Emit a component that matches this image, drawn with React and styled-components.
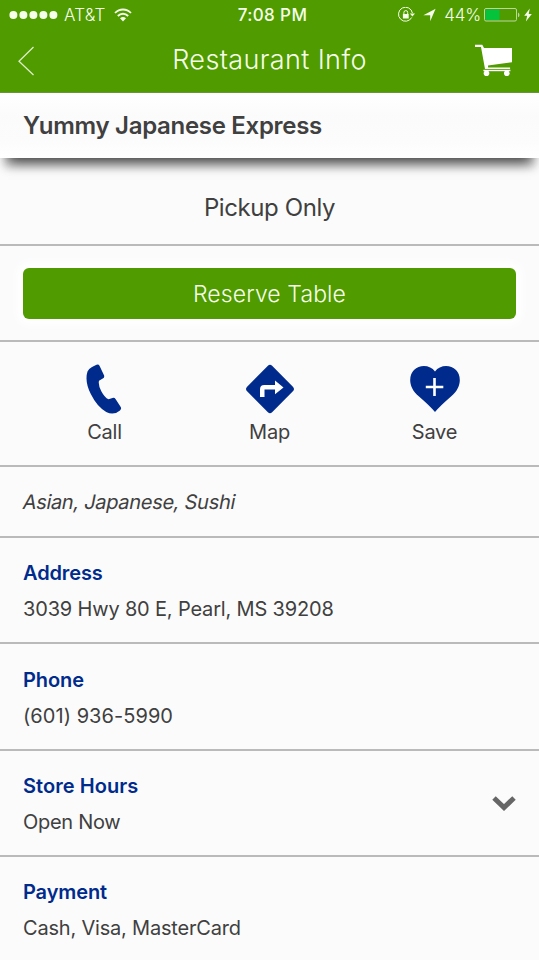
import React from "react";
import styled, { createGlobalStyle } from "styled-components";

const GREEN = "#4f9b00";
const NAVY = "#002b8c";

const GlobalStyle = createGlobalStyle`
  * { box-sizing: border-box; }
  body { margin: 0; background: #fbfbfb; overflow: hidden; }
`;

const Screen = styled.main`
  width: 539px;
  height: 960px;
  overflow: hidden;
  background: #fbfbfb;
  color: #404040;
  font-family: Inter, "Liberation Sans", sans-serif;
  white-space: nowrap;
`;

const Header = styled.header`
  height: 93px;
  background: ${GREEN};
  color: #f6ffe9;
  border-bottom: 1px solid #68973a;
`;

const StatusBar = styled.div`
  height: 30px;
  display: grid;
  grid-template-columns: 1fr auto 1fr;
  align-items: center;
  padding: 0 7px 0 9px;
  font-size: 17px;
  font-weight: 300;

  svg { flex: none; }
`;

const StatusGroup = styled.div`
  display: flex;
  align-items: center;
  justify-content: ${(p) => (p.$end ? "flex-end" : "flex-start")};
`;

const Carrier = styled.span`
  margin: 0 8px 0 6px;
  letter-spacing: 0.2px;
`;

const Clock = styled.time`
  font-weight: 500;
  letter-spacing: 0.4px;
  padding-left: 4px;
`;

const Percent = styled.span`
  margin: 0 3px 0 8px;
  letter-spacing: -0.15px;
`;

const NavBar = styled.nav`
  height: 62px;
  display: grid;
  grid-template-columns: 82px 1fr 82px;
  align-items: center;
`;

const NavButton = styled.button`
  display: flex;
  justify-content: ${(p) => (p.$end ? "flex-end" : "flex-start")};
  border: 0;
  padding: 0 ${(p) => (p.$end ? 26 : 18)}px ${(p) => (p.$end ? 2 : 0)}px 18px;
  background: none;
  color: inherit;

  svg { flex: none; }
`;

const NavTitle = styled.h1`
  margin: -3px 0 0;
  text-align: center;
  font-size: 27px;
  line-height: 34px;
  font-weight: 300;
  letter-spacing: 0.37px;
`;

const NameBar = styled.section`
  position: relative;
  height: 65px;
  padding: 0 23px;
  display: flex;
  align-items: center;
  background: linear-gradient(#fff, #fbfbfb 35%, #fcfcfc 75%, #fff);
  box-shadow: 0 12px 12px -8px rgba(0, 0, 0, 0.75), 0 14px 8px -4px rgba(0, 0, 0, 0.15);
`;

const Name = styled.h2`
  margin: 0;
  font-size: 24px;
  font-weight: 600;
  letter-spacing: -0.3px;
`;

const Panel = styled.section`
  height: ${(p) => p.$height}px;
  padding: 0 23px;
  display: flex;
  align-items: center;
  justify-content: ${(p) => (p.$center ? "center" : "flex-start")};
  border-bottom: 2px solid #bababa;
`;

const Service = styled.p`
  margin: 13px 0 0;
  font-size: 24px;
  letter-spacing: -0.4px;
`;

const ReserveButton = styled.button`
  width: 100%;
  height: 51px;
  padding: 1px 0 0;
  border: 0;
  border-radius: 6px;
  background: ${GREEN};
  color: #f6ffe9;
  font: 300 23px/50px Inter, "Liberation Sans", sans-serif;
  letter-spacing: 0.1px;
  box-shadow: 0 0 10px 6px #fff;
`;

const Actions = styled.section`
  height: 125px;
  padding: 22px 22px 0;
  display: grid;
  grid-template-columns: repeat(3, 1fr);
  border-bottom: 2px solid #bababa;
`;

const Action = styled.button`
  display: flex;
  flex-direction: column;
  align-items: center;
  padding: 0;
  border: 0;
  background: none;
  color: inherit;
  font: 400 20px/26px Inter, "Liberation Sans", sans-serif;
  letter-spacing: -0.2px;
`;

const ActionIcon = styled.svg`
  display: block;
  width: 50px;
  height: 50px;
  margin-bottom: 5px;
  fill: ${NAVY};
`;

const Cuisine = styled.p`
  margin: 1px 0 0;
  font-size: 20px;
  letter-spacing: -0.3px;
  transform: skewX(-11deg);
`;

const Detail = styled.section`
  height: ${(p) => p.$height}px;
  padding: ${(p) => p.$top}px 23px 0;
  display: flex;
  justify-content: space-between;
  border-bottom: 2px solid #bababa;
`;

const Label = styled.h3`
  margin: 0;
  color: ${NAVY};
  font-size: 20px;
  line-height: 28px;
  font-weight: 600;
  letter-spacing: ${(p) => p.$tracking}px;
`;

const Value = styled.p`
  margin: 8px 0 0;
  font-size: 20px;
  line-height: 28px;
  letter-spacing: ${(p) => p.$tracking}px;
`;

const Expand = styled.svg`
  width: 24px;
  height: 17px;
  margin-top: 23px;
`;

const details = [
  { label: "Address", value: "3039 Hwy 80 E, Pearl, MS 39208", height: 106, top: 21, lt: -0.12, vt: -0.17 },
  { label: "Phone", value: "(601) 936-5990", height: 107, top: 22, lt: -0.1, vt: 0.05 },
  { label: "Store Hours", value: "Open Now", height: 106, top: 21, lt: 0.05, vt: -0.3, expandable: true },
  { label: "Payment", value: "Cash, Visa, MasterCard", height: 107, top: 21, lt: -0.12, vt: -0.2 },
];

const SignalDots = () => (
  <svg width="49" height="10" viewBox="0 0 49 10" fill="currentColor">
    {[4.4, 14.4, 24.4, 34.4, 44.4].map((x) => <circle key={x} cx={x} cy="5" r="4" />)}
  </svg>
);

const Wifi = () => (
  <svg width="18" height="14" viewBox="0 0 18 14" fill="none" stroke="currentColor" strokeWidth="1.8">
    <path d="M1 5C5.5.3 12.5.3 17 5M3.8 8c3-3 7.4-3 10.4 0" />
    <path d="M6 10.2Q9 7.8 12 10.2L9 13.4Z" fill="currentColor" stroke="none" />
  </svg>
);

const RotationLock = () => (
  <svg width="18" height="16" viewBox="0 0 18 16" fill="none" stroke="currentColor">
    <path d="M13.7 10.5A7 7 0 1 1 14.4 6" strokeWidth="1" />
    <path d="M11.8 6.5h5.2l-2.6 3Z" fill="currentColor" stroke="none" />
    <rect x="4.9" y="7" width="5.8" height="4.5" fill="currentColor" stroke="none" />
    <path d="M5.9 7V5.5a1.9 1.9 0 0 1 3.8 0V7" strokeWidth="1" />
  </svg>
);

const ArrowMark = styled.svg`
  margin-left: 7px;
`;

const LocationArrow = () => (
  <ArrowMark width="13" height="14" viewBox="0 0 13 14" fill="currentColor">
    <path d="M12.6.8 7.2 13.2V7.2H.4Z" />
  </ArrowMark>
);

const Battery = () => (
  <svg width="36" height="14" viewBox="0 0 36 14">
    <rect x=".5" y=".5" width="32" height="12.5" rx="1.5" fill="none" stroke="#bed79f" />
    <rect x="1.5" y="1.5" width="14" height="10.5" fill="#05c33b" />
    <path d="M34 4.5v4.8q1.5-.8 1.5-2.4T34 4.5" fill="#bed79f" />
  </svg>
);

const BoltMark = styled.svg`
  margin-left: 4px;
`;

const Bolt = () => (
  <BoltMark width="8" height="14" viewBox="0 0 8 14" fill="currentColor">
    <path d="M5.8.5.2 7.8h3L1.900 13.500 7.800 6H4.700Z" />
  </BoltMark>
);

const BackIcon = () => (
  <svg width="17" height="30" viewBox="0 0 17 30" fill="none" stroke="#dfedc9" strokeWidth="1.3">
    <path d="M15.5 1 1 15.2 15.5 29" />
  </svg>
);

const CartIcon = () => (
  <svg width="38" height="33" viewBox="0 0 38 33" fill="#fff">
    <path d="M0 .8h7.300L9 4h28v14.300L13 21.500l.1 2h22v1.500H10L6 3H0Z" />
    <path d="M8.400 25.800h27v1.400h-27Z" />
    <circle cx="11.5" cy="29.3" r="2.8" />
    <circle cx="31.8" cy="29.3" r="2.8" />
  </svg>
);

const CallIcon = () => (
  <ActionIcon viewBox="-2.5 0 50 50">
    <path d="M9.5 3 14 .8q2-1 3 .9l4.5 9.6q.8 2-1.2 3.2l-3.8 2.2q-1 4.3 2.3 10.5t7.2 8.1l4-1.3q2-.6 3.2 1.3l5 7.6q1.1 2-.7 3.5-6.4 5.5-13.8 1.5-9-4.8-15.4-17.8T5 7.6Q6 4.8 9.5 3Z" />
  </ActionIcon>
);

const MapIcon = () => (
  <ActionIcon viewBox="0 0 50 50">
    <path d="m22.9 1.7-20.8 21q-2.200 2.300 0 4.600l20.800 21q2.100 2 4.200 0l20.800-21q2.200-2.300 0-4.600l-20.800-21q-2.100-2-4.200 0Z" />
    <path fill="#fff" d="M15 33V25.300q0-4.300 4.300-4.300H30V16.500l8.500 7L30 30.300v-4.800H19.500V33Z" />
  </ActionIcon>
);

const SaveIcon = () => (
  <ActionIcon viewBox="0 0 50 50">
    <path d="M25 48Q20 42 9 32.5C-2 23.5-1.5 11.5 4 6c6-6 16.5-5 21 1.5C29.5 1 40 0 46 6c5.5 5.5 6 17.5-5 26.5Q30 42 25 48Z" />
    <path d="M24.500 14v18M15.800 23h17.500" stroke="#fff" strokeWidth="2.600" />
  </ActionIcon>
);

export default function App() {
  return (
    <Screen>
      <GlobalStyle />
      <Header>
        <StatusBar>
          <StatusGroup>
            <SignalDots />
            <Carrier>AT&amp;T</Carrier>
            <Wifi />
          </StatusGroup>
          <Clock>7:08 PM</Clock>
          <StatusGroup $end>
            <RotationLock />
            <LocationArrow />
            <Percent>44%</Percent>
            <Battery />
            <Bolt />
          </StatusGroup>
        </StatusBar>
        <NavBar>
          <NavButton aria-label="Back"><BackIcon /></NavButton>
          <NavTitle>Restaurant Info</NavTitle>
          <NavButton $end aria-label="Cart"><CartIcon /></NavButton>
        </NavBar>
      </Header>
      <NameBar><Name>Yummy Japanese Express</Name></NameBar>
      <Panel $height={88} $center><Service>Pickup Only</Service></Panel>
      <Panel $height={96} $center><ReserveButton>Reserve Table</ReserveButton></Panel>
      <Actions>
        <Action><CallIcon />Call</Action>
        <Action><MapIcon />Map</Action>
        <Action><SaveIcon />Save</Action>
      </Actions>
      <Panel $height={71}><Cuisine>Asian, Japanese, Sushi</Cuisine></Panel>
      {details.map((d) => (
        <Detail key={d.label} $height={d.height} $top={d.top}>
          <div>
            <Label $tracking={d.lt}>{d.label}</Label>
            <Value $tracking={d.vt}>{d.value}</Value>
          </div>
          {d.expandable && (
            <Expand viewBox="0 0 24 17" fill="none" stroke="#666" strokeWidth="5">
              <path d="m2 3 10 9.5L22 3" />
            </Expand>
          )}
        </Detail>
      ))}
    </Screen>
  );
}
